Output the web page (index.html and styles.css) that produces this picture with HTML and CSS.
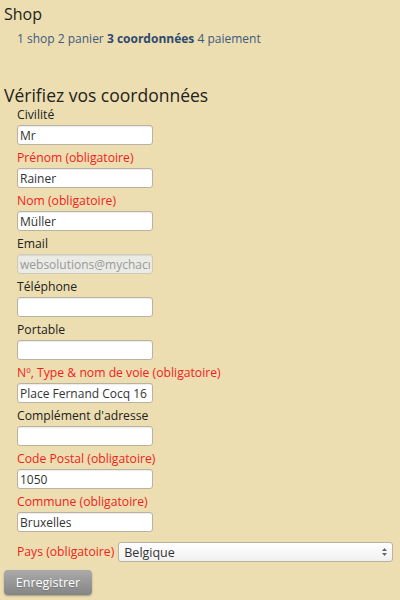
FILE: index.html
```html
<!DOCTYPE html>
<html lang="fr">
<head>
    <meta charset="UTF-8">
    <meta name="viewport" content="width=device-width, initial-scale=1.0">
    <title>Shop - coordonnées</title>
    <link rel="stylesheet" href="styles.css">
</head>
<body>
    <h1 class="shop-title">Shop</h1>
    <div class="steps">
        <a href="#">1 shop</a> <a href="#">2 panier</a> <b>3 coordonnées</b> <a href="#">4 paiement</a>
    </div>

    <h2 class="form-title">Vérifiez vos coordonnées</h2>
    <form class="coords">
        <div class="field">
            <label>Civilité</label>
            <input type="text" value="Mr">
        </div>
        <div class="field required">
            <label>Prénom (obligatoire)</label>
            <input type="text" value="Rainer">
        </div>
        <div class="field required">
            <label>Nom (obligatoire)</label>
            <input type="text" value="Müller">
        </div>
        <div class="field">
            <label>Email</label>
            <input type="text" value="websolutions@mychacra.com" disabled>
        </div>
        <div class="field">
            <label>Téléphone</label>
            <input type="text">
        </div>
        <div class="field">
            <label>Portable</label>
            <input type="text">
        </div>
        <div class="field required">
            <label>Nº, Type &amp; nom de voie (obligatoire)</label>
            <input type="text" value="Place Fernand Cocq 16">
        </div>
        <div class="field">
            <label>Complément d'adresse</label>
            <input type="text">
        </div>
        <div class="field required">
            <label>Code Postal (obligatoire)</label>
            <input type="text" value="1050">
        </div>
        <div class="field required">
            <label>Commune (obligatoire)</label>
            <input type="text" value="Bruxelles">
        </div>
        <div class="field-inline required">
            <label>Pays (obligatoire)</label>
            <div class="select">
                <span>Belgique</span>
                <svg width="7" height="10" viewBox="0 0 7 10"><path d="M3.5 1 L6 4 L1 4 Z M3.5 9 L6 6 L1 6 Z" fill="#666"/></svg>
            </div>
        </div>
        <button type="button" class="btn">Enregistrer</button>
    </form>
</body>
</html>
```

FILE: styles.css
```css
body, html {
    margin: 0;
    padding: 0;
    height: 100%;
    background-color: #ecdeb0;
    font-family: 'Open Sans', 'DejaVu Sans', sans-serif;
    color: #222;
    overflow: hidden;
}
body {
    padding: 0 4px;
}
.shop-title {
    font-size: 16px;
    font-weight: normal;
    line-height: 20px;
    margin: 4px 0 0 0;
}
.steps {
    font-size: 12px;
    line-height: 16px;
    margin: 7px 0 0 13px;
    color: #3d5a80;
}
.steps a {
    color: #3d5a80;
    text-decoration: none;
}
.steps b {
    color: #2e4a70;
}
.form-title {
    font-size: 17.5px;
    font-weight: normal;
    line-height: 20px;
    margin: 38px 0 2px 0;
}
.coords {
    margin: 0;
}
.field {
    margin: 0 0 5px 13px;
}
.field label, .field-inline label {
    display: block;
    font-size: 12.2px;
    line-height: 16px;
    margin-bottom: 2px;
}
.required label {
    color: #f21d1d;
}
.field input {
    display: block;
    box-sizing: border-box;
    width: 136px;
    height: 20px;
    padding: 0 2px;
    border: 1px solid #b8b2a0;
    border-radius: 3px;
    background: #fff;
    font-family: inherit;
    font-size: 12px;
    color: #333;
    box-shadow: inset 0 1px 1px rgba(0, 0, 0, 0.08);
}
.field input:disabled {
    background: #ebebe6;
    color: #999;
    border-color: #cfcab8;
}
.field-inline {
    display: flex;
    align-items: center;
    gap: 4px;
    margin: 10px 3px 0 13px;
}
.field-inline label {
    margin: 0;
}
.select {
    flex: 1;
    box-sizing: border-box;
    height: 20px;
    display: flex;
    align-items: center;
    justify-content: space-between;
    padding: 0 4px 0 5px;
    border: 1px solid #b8b2a0;
    border-radius: 3px;
    background: linear-gradient(#ffffff, #f0f0f0);
    font-size: 12.5px;
    color: #333;
}
.btn {
    display: block;
    margin-top: 8px;
    width: 88px;
    height: 25px;
    border: none;
    border-radius: 4px;
    background: linear-gradient(#aaaaaa, #858585);
    box-shadow: 0 1px 2px rgba(0, 0, 0, 0.3);
    color: #fff;
    font-family: inherit;
    font-size: 12.5px;
    text-shadow: 0 1px 1px rgba(0, 0, 0, 0.2);
}
```
